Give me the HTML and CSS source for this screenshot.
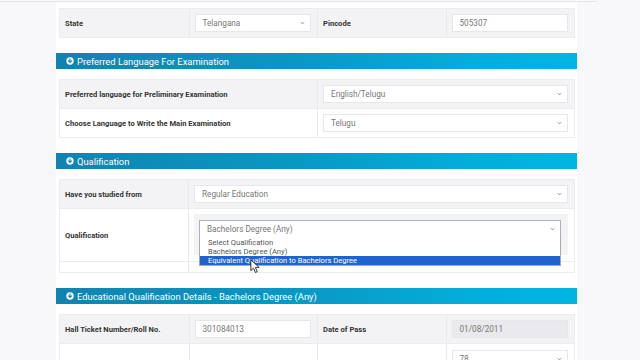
FILE: index.html
```html
<!DOCTYPE html>
<html>
<head>
<meta charset="utf-8">
<link rel="stylesheet" href="styles.css">
</head>
<body>
<div class="topbar"></div>
<div class="panel">
  <div class="tbl">
    <div class="row c4 gray">
      <div class="cell lbl">State</div>
      <div class="cell"><div class="sel"><span>Telangana</span><svg class="chev" viewBox="0 0 6 4"><path d="M1 1l2 2 2-2"/></svg></div></div>
      <div class="cell lbl">Pincode</div>
      <div class="cell"><div class="inp">505307</div></div>
    </div>
  </div>

  <div class="hdr"><svg class="ico" viewBox="0 0 10 10"><circle cx="5" cy="5" r="4.6"/><path d="M5 2.4v4.2M3 4.8l2 2 2-2"/></svg>Preferred Language For Examination</div>
  <div class="tbl">
    <div class="row c2 gray">
      <div class="cell lbl">Preferred language for Preliminary Examination</div>
      <div class="cell"><div class="sel"><span>English/Telugu</span><svg class="chev" viewBox="0 0 6 4"><path d="M1 1l2 2 2-2"/></svg></div></div>
    </div>
    <div class="row c2">
      <div class="cell lbl">Choose Language to Write the Main Examination</div>
      <div class="cell"><div class="sel"><span>Telugu</span><svg class="chev" viewBox="0 0 6 4"><path d="M1 1l2 2 2-2"/></svg></div></div>
    </div>
  </div>

  <div class="hdr"><svg class="ico" viewBox="0 0 10 10"><circle cx="5" cy="5" r="4.6"/><path d="M5 2.4v4.2M3 4.8l2 2 2-2"/></svg>Qualification</div>
  <div class="tbl">
    <div class="row c13 gray">
      <div class="cell lbl">Have you studied from</div>
      <div class="cell"><div class="sel"><span>Regular Education</span><svg class="chev" viewBox="0 0 6 4"><path d="M1 1l2 2 2-2"/></svg></div></div>
    </div>
    <div class="row c13 tall">
      <div class="cell lbl">Qualification</div>
      <div class="cell">
        <div class="qbox">
          <div class="sel focus"><span>Bachelors Degree (Any)</span><svg class="chev" viewBox="0 0 6 4"><path d="M1 1l2 2 2-2"/></svg></div>
          <div class="dropdown">
            <div class="opt">Select Qualification</div>
            <div class="opt">Bachelors Degree (Any)</div>
            <div class="opt active">Equivalent Qualification to Bachelors Degree</div>
          </div>
          <svg class="cursor" viewBox="0 0 12 18"><path d="M1 1v13l3.2-3 2.3 5.2 2.2-1-2.3-5.1H11z"/></svg>
        </div>
      </div>
    </div>
    <div class="row c13 short">
      <div class="cell"></div>
      <div class="cell"></div>
    </div>
  </div>

  <div class="hdr"><svg class="ico" viewBox="0 0 10 10"><circle cx="5" cy="5" r="4.6"/><path d="M5 2.4v4.2M3 4.8l2 2 2-2"/></svg>Educational Qualification Details - Bachelors Degree (Any)</div>
  <div class="tbl">
    <div class="row c4 gray">
      <div class="cell lbl">Hall Ticket Number/Roll No.</div>
      <div class="cell"><div class="inp">301084013</div></div>
      <div class="cell lbl">Date of Pass</div>
      <div class="cell"><div class="inp dis">01/08/2011</div></div>
    </div>
    <div class="row c4">
      <div class="cell lbl"></div>
      <div class="cell"></div>
      <div class="cell lbl"></div>
      <div class="cell"><div class="sel last"><span>78</span><svg class="chev" viewBox="0 0 6 4"><path d="M1 1l2 2 2-2"/></svg></div></div>
    </div>
  </div>
</div>
</body>
</html>
```
FILE: styles.css
```css
html, body {
  margin: 0;
  background: #f8f8fb;
  font-family: Roboto, "Noto Sans", sans-serif;
  overflow: hidden;
}
.topbar {
  width: 597px;
  height: 1px;
  border-bottom: 1px solid #e6e6ea;
}
.panel {
  margin-left: 56px;
  width: 521px;
  background: #fff;
  padding-top: 6px;
  padding-bottom: 40px;
}
.tbl {
  margin: 0 2px 0 3px;
  border: 1px solid #ececee;
}
.hdr {
  margin-top: 15px;
  height: 16px;
  display: flex;
  align-items: center;
  gap: 3px;
  padding-left: 10px;
  color: #fff;
  font-size: 9.4px;
  background: linear-gradient(90deg, #1283b0 0%, #0a97c4 45%, #03aedb 80%, #00b4e1 100%);
}
.hdr + .tbl {
  margin-top: 10px;
}
.ico {
  width: 8px;
  height: 8px;
}
.ico circle {
  fill: #fff;
}
.ico path {
  fill: none;
  stroke: #1184b0;
  stroke-width: 1.4;
  stroke-linecap: round;
  stroke-linejoin: round;
}
.row {
  display: grid;
  min-height: 28px;
}
.row + .row {
  border-top: 1px solid #ececee;
}
.row.tall {
  min-height: 52px;
}
.row.short {
  min-height: 10px;
}
.c4 { grid-template-columns: repeat(4, 1fr); }
.c2 { grid-template-columns: 1fr 1fr; }
.c13 { grid-template-columns: 128px 1fr; }
.gray { background: #f3f3f5; }
.cell {
  display: flex;
  align-items: center;
  padding: 0 6px 0 5px;
  border-left: 1px solid #e9e9ec;
  min-width: 0;
}
.cell:first-child {
  border-left: none;
}
.lbl {
  font-size: 7.6px;
  font-weight: 700;
  color: #333;
}
.sel, .inp {
  flex: 1;
  box-sizing: border-box;
  height: 18px;
  border: 1px solid #e7e7ea;
  background: #fff;
  font-size: 8.2px;
  color: #777;
  padding: 0 5px 0 7px;
  display: flex;
  align-items: center;
  justify-content: space-between;
}
.sel.last {
  align-self: flex-start;
  margin-top: 6px;
}
.inp.dis {
  background: #eaeaee;
}
.chev {
  width: 5px;
  height: 4px;
}
.chev path {
  fill: none;
  stroke: #777;
  stroke-width: 1;
}
.qbox {
  flex: 1;
  align-self: stretch;
  margin: 5px 0 6px;
  padding: 6px 7px 16px 5px;
  background: #f3f3f5;
  position: relative;
}
.sel.focus {
  border-color: #a9b2bc;
}
.dropdown {
  position: absolute;
  top: 23px;
  left: 5px;
  right: 7px;
  background: #fff;
  border: 1px solid #a9a9ad;
  border-top: none;
  padding-top: 1px;
  font-size: 7.6px;
  color: #555;
}
.opt {
  height: 9px;
  line-height: 9px;
  padding-left: 8px;
}
.opt.active {
  background: #1f63ce;
  color: #fff;
}
.cursor {
  position: absolute;
  left: 56px;
  top: 45px;
  width: 10px;
  height: 15px;
}
.cursor path {
  fill: #fff;
  stroke: #111;
  stroke-width: 1;
  stroke-linejoin: round;
}
```
